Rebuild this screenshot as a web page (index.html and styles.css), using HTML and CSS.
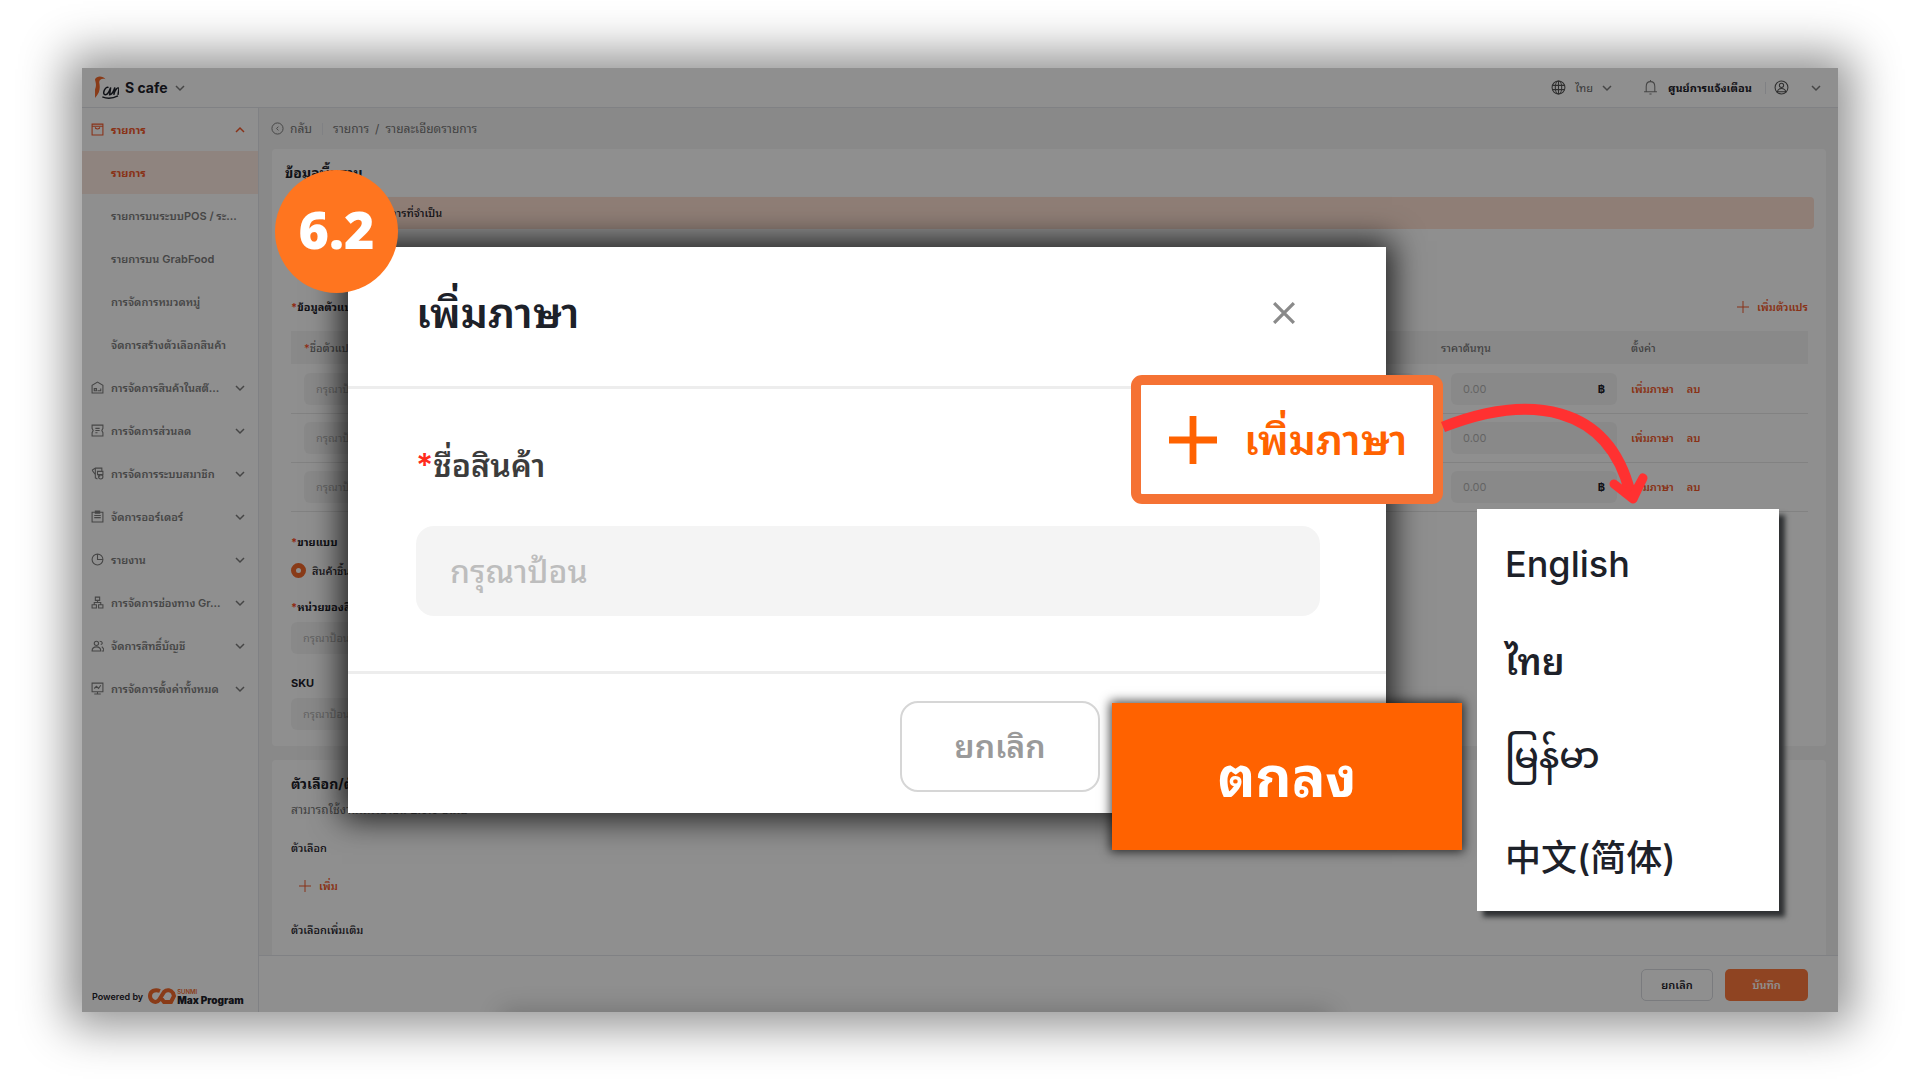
FILE: index.html
```html
<!DOCTYPE html>
<html lang="th">

<head>
 <meta charset="UTF-8">
 <meta name="viewport" content="width=device-width">
 <title>เพิ่มภาษา</title>
 <link rel="stylesheet" href="styles.css">
</head>

<body>

 <!-- Iconos compartidos -->
 <svg class="sprite" aria-hidden="true">
  <symbol id="down" viewBox="0 0 12 12"><path d="M2 4l4 4 4-4" /></symbol>
  <symbol id="up" viewBox="0 0 12 12"><path d="M2 8l4-4 4 4" /></symbol>
  <symbol id="plus" viewBox="0 0 12 12"><path d="M6 0v12M0 6h12" /></symbol>
 </svg>

 <div class="app">
  <header class="topbar">
   <svg class="logo" viewBox="0 0 24 22">
    <path d="M1 21V13C3 8 1 5 1 3c2-4 8-3 10 0-3-1-6 0-6 3 1 5 1 10-4 15z" fill="#f4692b" />
    <path d="M14 11c-3-2-7 7-3 7 2 0 4-4 5-7l-1 7c2 0 4-4 5-7l-1 7c1-5 4-8 5-6l-1 6M8 20c5 2 11 1 15-1" fill="none" stroke="#1d2129" stroke-width="1.4" />
   </svg>
   <strong class="shop">S cafe</strong>
   <svg class="chevron"><use href="#down" /></svg>
   <div class="tools">
    <svg class="tool" viewBox="0 0 14 14"><circle cx="7" cy="7" r="6" /><ellipse cx="7" cy="7" rx="3" ry="6" /><path d="M1 5h12M1 9h12M7 1v12" /></svg>
    <span class="lang">ไทย</span>
    <svg class="chevron"><use href="#down" /></svg>
    <svg class="tool bell" viewBox="0 0 14 14"><path d="M1 11h12M3 11V6c0-6 8-6 8 0v5M6 13h2M7 1V0" /></svg>
    <strong>ศูนย์การแจ้งเตือน</strong>
    <span class="separator"></span>
    <svg class="tool" viewBox="0 0 14 14"><circle cx="7" cy="7" r="6" /><circle cx="7" cy="5" r="2" /><path d="M3 11c1-4 7-4 8 0z" /></svg>
    <svg class="chevron last"><use href="#down" /></svg>
   </div>
  </header>

  <div class="content">
   <nav class="sidebar">
    <a class="item open" href="#">
     <svg class="icon" viewBox="0 0 12 12"><path d="M1 1h10v10H1zM1 3h10M4 4c0 2 4 2 4 0" /></svg>
     <span>รายการ</span><svg class="chevron"><use href="#up" /></svg>
    </a>
    <a class="item sub active" href="#"><span>รายการ</span></a>
    <a class="item sub" href="#"><span>รายการบนระบบPOS / ระ...</span></a>
    <a class="item sub" href="#"><span>รายการบน GrabFood</span></a>
    <a class="item sub" href="#"><span>การจัดการหมวดหมู่</span></a>
    <a class="item sub" href="#"><span>จัดการสร้างตัวเลือกสินค้า</span></a>
    <a class="item" href="#">
     <svg class="icon" viewBox="0 0 12 12"><path d="M1 11V4l5-3 5 3v7zM3 9h2V7H3zM6 9h3V7" /></svg>
     <span>การจัดการสินค้าในสต๊...</span><svg class="chevron"><use href="#down" /></svg>
    </a>
    <a class="item" href="#">
     <svg class="icon" viewBox="0 0 12 12"><path d="M1 1h10v3l-1 2 1 2v3H1V8l1-2-1-2zM4 4h4M4 6h4M4 8h2" /></svg>
     <span>การจัดการส่วนลด</span><svg class="chevron"><use href="#down" /></svg>
    </a>
    <a class="item" href="#">
     <svg class="icon" viewBox="0 0 12 12"><path d="M1 3l3-2h6v3M1 3l3 4V1M4 7v3l2 1M6 4h5v3H6zM8 7v2" /><circle cx="9" cy="9" r="2" /></svg>
     <span>การจัดการระบบสมาชิก</span><svg class="chevron"><use href="#down" /></svg>
    </a>
    <a class="item" href="#">
     <svg class="icon" viewBox="0 0 12 12"><path d="M1 2h10v9H1zM4 1h4v2H4zM3 5h6M3 7h6" /></svg>
     <span>จัดการออร์เดอร์</span><svg class="chevron"><use href="#down" /></svg>
    </a>
    <a class="item" href="#">
     <svg class="icon" viewBox="0 0 12 12"><circle cx="6" cy="6" r="5" /><path d="M6 1v5h5" /></svg>
     <span>รายงาน</span><svg class="chevron"><use href="#down" /></svg>
    </a>
    <a class="item" href="#">
     <svg class="icon" viewBox="0 0 12 12"><path d="M4 1h4v3H4zM1 8h4v3H1zM7 8h4v3H7zM6 4v2M3 8V6h6v2" /></svg>
     <span>การจัดการช่องทาง Gr...</span><svg class="chevron"><use href="#down" /></svg>
    </a>
    <a class="item" href="#">
     <svg class="icon" viewBox="0 0 12 12"><circle cx="5" cy="4" r="2" /><path d="M1 11c0-5 8-5 8 0zM8 2c3 0 3 3 1 3M10 7c1 1 2 2 2 4h-2" /></svg>
     <span>จัดการสิทธิ์บัญชี</span><svg class="chevron"><use href="#down" /></svg>
    </a>
    <a class="item" href="#">
     <svg class="icon" viewBox="0 0 12 12"><path d="M1 1h10v8H1zM3 11h6M6 9v2M3 6l2-2 2 2 2-3" /></svg>
     <span>การจัดการตั้งค่าทั้งหมด</span><svg class="chevron"><use href="#down" /></svg>
    </a>
    <div class="powered">
     <span>Powered by</span>
     <svg class="max-logo" viewBox="0 0 28 17">
      <path d="M12 3C7 1 2 3 2 8s6 8 9 4l5-8c3-3 7-2 9 1l1 3-3 6h-7l-3-4" fill="none" stroke="#f4692b" stroke-width="4" />
     </svg>
     <div class="max-name"><small>SUNMI</small><strong>Max Program</strong></div>
    </div>
   </nav>

   <main class="main">
    <div class="breadcrumb">
     <svg class="back" viewBox="0 0 14 14"><circle cx="7" cy="7" r="6" /><path d="M8 5L6 7l2 2" /></svg>
     <a href="#">กลับ</a>
     <span class="separator"></span>
     <a href="#">รายการ</a><span>/</span><span>รายละเอียดรายการ</span>
    </div>

    <div class="cards">
     <section class="card">
      <h2>ข้อมูลพื้นฐาน</h2>
      <p class="notice">รายการที่จำเป็น</p>
      <div class="block">
       <div class="table-title">
        <span class="label"><span class="required">*</span>ข้อมูลตัวแปร</span>
        <button class="add" type="button"><svg><use href="#plus" /></svg>เพิ่มตัวแปร</button>
       </div>
       <table class="variants">
        <thead>
         <tr>
          <th><span class="required">*</span>ชื่อตัวแปร</th>
          <th class="cost">ราคาต้นทุน</th>
          <th class="settings">ตั้งค่า</th>
         </tr>
        </thead>
        <tbody>
         <tr>
          <td><input class="field" aria-label="ชื่อตัวแปร 1" placeholder="กรุณาป้อน"></td>
          <td class="cost"><div class="money field"><input aria-label="ราคาต้นทุน 1" placeholder="0.00"><b>฿</b></div></td>
          <td class="settings"><a href="#">เพิ่มภาษา</a><a href="#">ลบ</a></td>
         </tr>
         <tr>
          <td><input class="field" aria-label="ชื่อตัวแปร 2" placeholder="กรุณาป้อน"></td>
          <td class="cost"><div class="money field"><input aria-label="ราคาต้นทุน 2" placeholder="0.00"><b>฿</b></div></td>
          <td class="settings"><a href="#">เพิ่มภาษา</a><a href="#">ลบ</a></td>
         </tr>
         <tr>
          <td><input class="field" aria-label="ชื่อตัวแปร 3" placeholder="กรุณาป้อน"></td>
          <td class="cost"><div class="money field"><input aria-label="ราคาต้นทุน 3" placeholder="0.00"><b>฿</b></div></td>
          <td class="settings"><a href="#">เพิ่มภาษา</a><a href="#">ลบ</a></td>
         </tr>
        </tbody>
       </table>
       <span class="label sale"><span class="required">*</span>ขายแบบ</span>
       <label class="radio"><input type="radio" name="tipo" checked>สินค้าชิ้น</label>
       <label class="label" for="unidad"><span class="required">*</span>หน่วยของสินค้า</label>
       <input class="field" id="unidad" placeholder="กรุณาป้อน">
       <label class="label" for="sku">SKU</label>
       <input class="field" id="sku" placeholder="กรุณาป้อน">
      </div>
     </section>

     <section class="card options">
      <h2>ตัวเลือก/ตัวเลือกเพิ่มเติม</h2>
      <p class="hint">สามารถใช้งานได้เวอร์ชัน 2.0.0 ขึ้นไป</p>
      <h3>ตัวเลือก</h3>
      <button class="add" type="button"><svg><use href="#plus" /></svg>เพิ่ม</button>
      <h3>ตัวเลือกเพิ่มเติม</h3>
     </section>
    </div>

    <footer class="actions">
     <button type="button">ยกเลิก</button>
     <button class="save" type="submit">บันทึก</button>
    </footer>
   </main>
  </div>
  <div class="backdrop"></div>
 </div>

 <form class="modal" role="dialog" aria-labelledby="titulo">
  <div class="modal-head">
   <h1 id="titulo">เพิ่มภาษา</h1>
   <button class="close" type="button" aria-label="ปิด">
    <svg viewBox="0 0 20 20"><path d="M1 1l18 18M19 1L1 19" /></svg>
   </button>
  </div>
  <div class="modal-body">
   <label for="nombre"><span class="required">*</span>ชื่อสินค้า</label>
   <input id="nombre" placeholder="กรุณาป้อน">
  </div>
  <div class="modal-foot">
   <button class="cancel" type="button">ยกเลิก</button>
  </div>
 </form>

 <button class="confirm" type="submit">ตกลง</button>

 <button class="add-language" type="button">
  <svg><use href="#plus" /></svg>
  <span>เพิ่มภาษา</span>
 </button>

 <svg class="arrow" viewBox="0 0 220 110" aria-hidden="true">
  <path class="line" d="M3 27C90-7 168 5 190 92" />
  <path class="head" d="M174 84l19 15 10-21-11 20z" />
 </svg>

 <ul class="languages">
  <li><a href="#" lang="en">English</a></li>
  <li><a href="#">ไทย</a></li>
  <li><a href="#" lang="my">မြန်မာ</a></li>
  <li><a href="#" lang="zh">中文(简体)</a></li>
 </ul>

 <div class="step">6.2</div>

</body>
</html>
```
FILE: styles.css
```css
* {
  box-sizing: border-box;
}
body {
  position: relative;
  margin: 0;
  padding: 68px 82px;
  height: 100vh;
  background-color: white;
  font-family: Inter, "Noto Sans Thai Looped", "Noto Looped Thai", Loma, Waree, Garuda, "Noto Sans CJK SC", sans-serif;
  font-size: 11px;
  line-height: 16px;
  color: #1d2129;
  overflow: hidden;
}
h1,
h2,
h3,
p,
ul {
  margin: 0;
  padding: 0;
}
a {
  color: inherit;
  text-decoration: none;
}
button,
input {
  font: inherit;
  color: inherit;
  border: none;
  background: none;
  padding: 0;
}
svg {
  fill: none;
  stroke: currentColor;
  flex: none;
}
.sprite {
  position: absolute;
  width: 0;
  height: 0;
}
.required {
  color: #ff4d1f;
}
.chevron {
  width: 12px;
  height: 12px;
  stroke-width: 1.5;
  color: #7d7d7d;
}
.separator {
  width: 1px;
  height: 12px;
  background-color: #e5e6eb;
}

/* Aplicación de fondo */
.app {
  position: relative;
  display: flex;
  flex-direction: column;
  height: 100%;
  background-color: white;
  box-shadow: 0 0 44px 14px rgba(0, 0, 0, 0.44);
  overflow: hidden;
}
.backdrop {
  position: absolute;
  inset: 0;
  background-color: rgba(0, 0, 0, 0.44);
  overflow: hidden;
}
.backdrop::after {
  content: "";
  position: absolute;
  top: 100%;
  left: 24%;
  right: 29%;
  height: 20px;
  box-shadow: 0 0 24px 2px rgba(0, 0, 0, 0.2);
}
.topbar {
  display: flex;
  align-items: center;
  flex: none;
  height: 40px;
  padding: 0 16px 0 12px;
  border-bottom: 1px solid #e5e6eb;
}
.logo {
  width: 25px;
  height: 23px;
  stroke: none;
  margin-right: 6px;
}
.shop {
  font-size: 14px;
  margin-right: 6px;
}
.tools {
  display: flex;
  align-items: center;
  margin-left: auto;
}
.tool {
  width: 15px;
  height: 15px;
  color: #555;
}
.lang {
  margin: 0 8px 0 9px;
  color: #666;
}
.bell {
  margin: 0 10px 0 30px;
  color: #7d7d7d;
}
.tools .separator {
  margin: 0 8px 0 13px;
}
.last {
  margin-left: 21px;
}
.content {
  display: flex;
  flex: 1;
  min-height: 0;
}
.sidebar {
  display: flex;
  flex-direction: column;
  flex: none;
  width: 177px;
  border-right: 1px solid #e5e6eb;
}
.item {
  display: flex;
  align-items: center;
  height: 43px;
  padding: 0 12px 0 9px;
  color: #7d7d7d;
  font-weight: 600;
  white-space: nowrap;
}
.item .icon {
  width: 13px;
  height: 13px;
  margin-right: 7px;
}
.item .chevron {
  margin-left: auto;
}
.item.sub {
  padding-left: 29px;
}
.item.open,
.item.open .chevron,
.item.active {
  color: #f4592b;
  font-weight: 700;
}
.item.active {
  background-color: #ffece3;
}
.powered {
  display: flex;
  align-items: center;
  margin: auto 0 7px 10px;
  gap: 5px;
  font-size: 9px;
  font-weight: 600;
}
.max-logo {
  width: 28px;
  height: 17px;
}
.max-name {
  display: flex;
  flex-direction: column;
  margin-left: -4px;
  font-size: 10px;
  line-height: 10px;
}
.max-name small {
  font-size: 6px;
  line-height: 7px;
  color: #f4692b;
}
.main {
  display: flex;
  flex-direction: column;
  flex: 1;
  min-width: 0;
  background-color: #f5f5f5;
}
.breadcrumb {
  display: flex;
  align-items: center;
  flex: none;
  gap: 6px;
  height: 41px;
  padding-left: 12px;
  color: #757575;
  font-size: 12px;
}
.back {
  width: 13px;
  height: 13px;
}
.breadcrumb .separator {
  margin: 0 4px;
}
.cards {
  display: flex;
  flex-direction: column;
  flex: 1;
  gap: 14px;
  min-height: 0;
  padding: 0 12px 0 13px;
  overflow: hidden;
}
.card {
  flex: none;
  padding: 12px 12px 16px 13px;
  border-radius: 4px;
  background-color: white;
}
h2 {
  font-size: 14px;
  line-height: 24px;
}
.notice {
  margin-top: 12px;
  padding: 0 88px;
  border-radius: 4px;
  background-color: #ffe0d3;
  font-weight: 500;
  line-height: 32px;
}
.block {
  display: flex;
  flex-direction: column;
  padding: 70px 6px 0;
}
.table-title {
  display: flex;
  justify-content: space-between;
  margin-bottom: 16px;
}
.label {
  font-weight: 700;
}
.add {
  display: flex;
  align-items: center;
  gap: 8px;
  color: #f4592b;
  font-weight: 600;
}
.add svg {
  width: 12px;
  height: 12px;
}
.variants {
  width: 100%;
  border-collapse: collapse;
  table-layout: fixed;
}
th {
  height: 33px;
  padding: 0 13px;
  background-color: #f5f5f5;
  color: #757575;
  font-weight: 500;
  text-align: left;
}
td {
  height: 49px;
  padding: 1px 13px 0;
  border-bottom: 1px solid #e8e8e8;
}
th.cost {
  width: 190px;
}
td.cost {
  padding: 1px 1px 0 23px;
}
th.settings {
  width: 190px;
}
.settings a {
  margin-right: 13px;
  color: #f4592b;
  font-weight: 600;
}
.field {
  width: 100%;
  height: 32px;
  padding: 0 12px;
  border-radius: 6px;
  background-color: #f5f5f5;
}
.field::placeholder,
.field input::placeholder {
  color: #b3b3b3;
  opacity: 1;
}
.money {
  display: flex;
  align-items: center;
  justify-content: space-between;
}
.money input {
  width: 80px;
}
.sale {
  margin-top: 22px;
}
.radio {
  display: flex;
  align-items: center;
  gap: 6px;
  margin: 13px 0 20px;
  font-weight: 500;
}
.radio input {
  appearance: none;
  width: 15px;
  height: 15px;
  margin: 0;
  border: 5px solid #f4692b;
  border-radius: 50%;
}
.block > .field {
  width: 50%;
  margin: 7px 0 21px;
}
.block > .field:last-child {
  margin-bottom: 0;
}
.options {
  padding-left: 19px;
  padding-bottom: 32px;
}
.hint {
  margin-top: 6px;
  color: #757575;
  font-size: 12px;
}
h3 {
  margin-top: 22px;
  font-size: 11px;
  font-weight: 500;
}
.options .add {
  margin: 22px 0 28px 8px;
}
.actions {
  display: flex;
  align-items: center;
  justify-content: flex-end;
  flex: none;
  gap: 12px;
  height: 57px;
  padding: 2px 30px 0 0;
  border-top: 1px solid #e5e6eb;
  background-color: white;
}
.actions button {
  width: 72px;
  height: 32px;
  border: 1px solid #d9dbe0;
  border-radius: 5px;
  font-weight: 600;
}
.actions .save {
  width: 83px;
  border: none;
  background-color: #ff7a3d;
  color: white;
}

/* Ventana para añadir idioma */
.modal {
  position: absolute;
  top: 247px;
  left: 348px;
  width: 1038px;
  background-color: white;
  box-shadow: 0 0 30px 6px rgba(0, 0, 0, 0.8);
  font-size: 32px;
  line-height: 48px;
}
.modal-head {
  display: flex;
  align-items: center;
  justify-content: space-between;
  height: 142px;
  padding: 0 91px 8px 68px;
  border-bottom: 3px solid #ededed;
}
h1 {
  font-size: 42px;
  font-weight: 600;
}
.close {
  width: 22px;
  height: 22px;
}
.close svg {
  display: block;
  color: #8a8a8a;
  stroke-width: 3;
}
.modal-body {
  display: flex;
  flex-direction: column;
  gap: 36px;
  padding: 53px 66px 55px 68px;
  color: #3c3c3c;
}
.modal-body label {
  font-weight: 600;
}
.modal-body .required {
  color: #ff2b1c;
}
.modal-body input {
  height: 90px;
  padding: 0 34px;
  border-radius: 18px;
  background-color: #f4f4f4;
  font-weight: 500;
}
.modal-body input::placeholder {
  color: #bdbdbd;
  opacity: 1;
}
.modal-foot {
  display: flex;
  height: 142px;
  padding: 27px 66px 0 552px;
  border-top: 3px solid #ededed;
}
.cancel {
  width: 200px;
  height: 91px;
  border: 2px solid #d6d6d6;
  border-radius: 18px;
  color: #9a9a9a;
  font-weight: 600;
}
.confirm {
  position: absolute;
  top: 703px;
  left: 1112px;
  width: 350px;
  height: 147px;
  background-color: #ff6200;
  box-shadow: 0 0 10px 2px rgba(0, 0, 0, 0.7);
  color: white;
  font-size: 56px;
  font-weight: 700;
}
.add-language {
  position: absolute;
  top: 375px;
  left: 1131px;
  display: flex;
  align-items: center;
  gap: 27px;
  width: 312px;
  height: 129px;
  padding-left: 28px;
  border: 10px solid #f57234;
  border-radius: 11px;
  background-color: white;
  color: #ff6200;
  font-size: 42px;
  font-weight: 600;
}
.add-language svg {
  width: 48px;
  height: 48px;
  stroke-width: 1.7;
}
.arrow {
  position: absolute;
  top: 400px;
  left: 1440px;
  width: 220px;
  height: 110px;
  color: #ff3131;
}
.arrow .line {
  stroke-width: 11;
}
.arrow .head {
  fill: currentColor;
  stroke-width: 9;
  stroke-linejoin: round;
}
.languages {
  position: absolute;
  top: 509px;
  left: 1477px;
  width: 302px;
  padding: 6px 28px 4px;
  background-color: white;
  box-shadow: 6px 6px 5px #2f3133;
  list-style: none;
  font-size: 36px;
  font-weight: 500;
}
.languages a {
  display: flex;
  align-items: center;
  height: 98px;
}
.languages a:lang(th) {
  font-weight: 600;
}
.languages a:lang(my) {
  font-family: "Noto Sans Myanmar", Inter, sans-serif;
}
.step {
  position: absolute;
  top: 170px;
  left: 275px;
  width: 123px;
  height: 123px;
  border-radius: 50%;
  background-color: #ff751f;
  color: white;
  font-family: "Open Sans", sans-serif;
  font-size: 52px;
  font-weight: 800;
  line-height: 118px;
  text-align: center;
}
```
